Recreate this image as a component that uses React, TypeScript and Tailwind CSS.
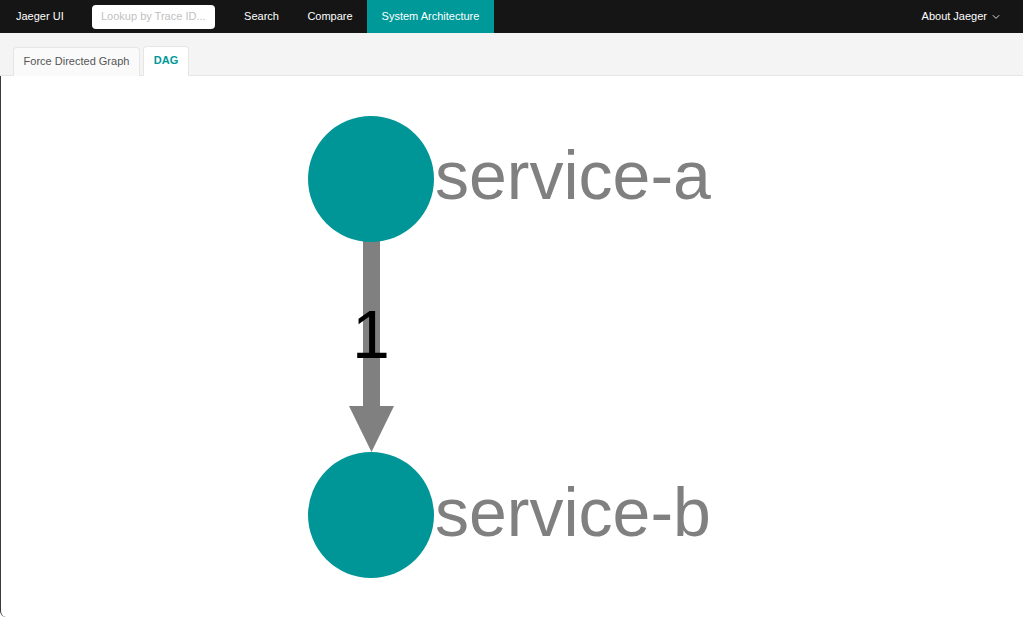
import React from "react";

export default function App() {
  const font = { fontFamily: '"Liberation Sans", Arial, Helvetica, sans-serif' };
  return (
    <div className="w-[1023px] h-[617px] flex flex-col bg-white overflow-hidden" style={font}>
      {/* Top nav */}
      <div className="h-[33px] bg-[#151515] flex items-stretch text-[11px] text-white shrink-0 whitespace-nowrap">
        <div className="w-[92px] shrink-0 flex items-center pl-[16px]">Jaeger UI</div>
        <div className="flex items-center shrink-0">
          <div className="w-[123px] h-[24px] bg-white rounded-[4px] flex items-center pl-[9px] text-[#bfbfbf] text-[11px] overflow-hidden">
            Lookup by Trace ID...
          </div>
        </div>
        <div className="flex items-stretch ml-[15px] shrink-0">
          <div className="w-[63px] flex items-center justify-center">Search</div>
          <div className="w-[74px] flex items-center justify-center">Compare</div>
          <div className="w-[127px] flex items-center justify-center bg-[#009999]">System Architecture</div>
        </div>
        <div className="flex-1" />
        <div className="flex items-center pr-[23px] gap-[5px] shrink-0">
          <span>About Jaeger</span>
          <svg width="8" height="6" viewBox="0 0 8 6" className="mt-[1px]">
            <path d="M0.8 1.2 L4 4.4 L7.2 1.2" stroke="#d9d9d9" strokeWidth="1" fill="none" />
          </svg>
        </div>
      </div>

      {/* Tab bar */}
      <div className="h-[43px] bg-[#f4f4f4] border-b border-[#e6e6e6] flex items-end pl-[13px] gap-[3px] shrink-0 text-[11px] whitespace-nowrap">
        <div className="w-[127px] h-[29px] pb-[2px] flex items-center justify-center border border-b-0 border-[#e6e6e6] rounded-t-[4px] bg-[#fafafa] text-[#555555] -mb-px">
          Force Directed Graph
        </div>
        <div className="w-[46px] h-[30px] pb-[2px] flex items-center justify-center border border-b-0 border-[#e6e6e6] rounded-t-[4px] bg-white text-[#009999] font-bold -mb-px">
          DAG
        </div>
      </div>

      {/* Graph canvas */}
      <div className="flex-1 relative border-l border-[#3a3a3a] rounded-bl-[6px]">
        <svg width="1023" height="541" viewBox="0 76 1023 541" className="absolute left-[-1px] top-0">
          <rect x="363" y="240" width="17" height="168" fill="#808080" />
          <polygon points="349,406 394,406 371.5,452" fill="#808080" />
          <text x="371" y="358" textAnchor="middle" fontSize="68" fill="#000" style={font}>1</text>
          <circle cx="371" cy="179" r="63" fill="#009596" />
          <circle cx="371" cy="515" r="63" fill="#009596" />
          <text x="435" y="199" fontSize="68" fill="#808080" style={font}>service-a</text>
          <text x="435" y="536" fontSize="68" fill="#808080" style={font}>service-b</text>
        </svg>
      </div>
    </div>
  );
}
